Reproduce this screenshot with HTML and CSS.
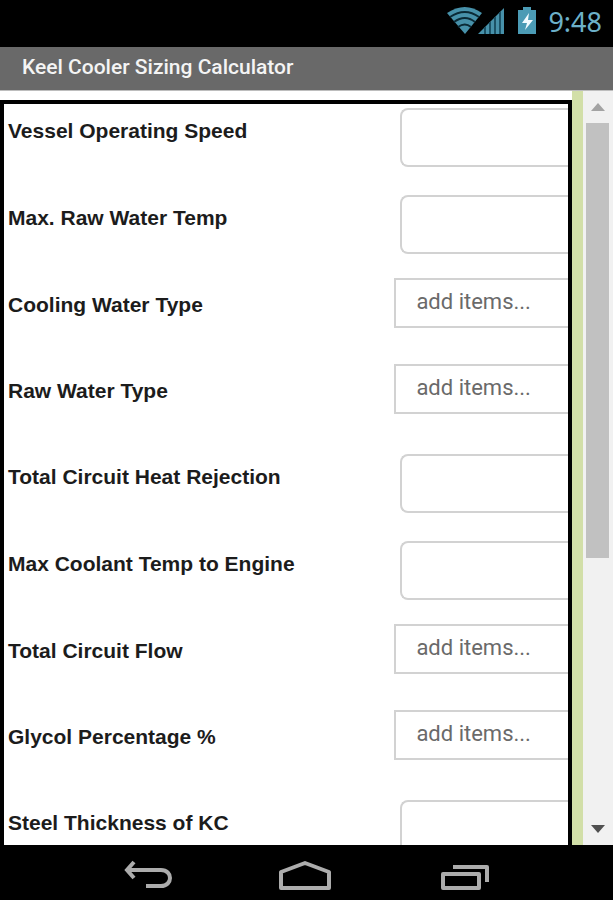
FILE: index.html
```html
<!DOCTYPE html>
<html lang="en">
<head>
<meta charset="utf-8">
<meta name="viewport" content="width=device-width, initial-scale=1">
<title>Keel Cooler Sizing Calculator</title>
<link rel="stylesheet" href="styles.css">
</head>
<body>
<div class="status">
  <svg class="status-icons" width="90" height="32" viewBox="0 0 90 32" aria-hidden="true">
    <path d="M0 7Q18-5 35 7L18 28Z" fill="#4791aa"/>
    <path d="M3 11Q18 1 32 11M7 16Q18 8 28 16M11 21Q18 16 24 21" fill="none" stroke="#0b2a36" stroke-width="2"/>
    <path d="M31 28L57 2V28Z" fill="#4791aa"/>
    <path d="M38 21V28M43 16V28M48 11V28M53 6V28" stroke="#1c5266" stroke-width="2"/>
    <path d="M71 4H76V1H84V4H89V28H71Z" fill="#4b9bb5"/>
    <path d="M82 7L75 17H80L78 24L86 14H81Z" fill="#f2fbff"/>
  </svg>
  <span class="clock">9:48</span>
</div>
<header class="titlebar"><h1 class="title">Keel Cooler Sizing Calculator</h1></header>
<main class="content">
  <form class="panel">
    <div class="row"><label class="label" for="speed">Vessel Operating Speed</label><input class="field" id="speed" type="text"></div>
    <div class="row"><label class="label" for="rawtemp">Max. Raw Water Temp</label><input class="field" id="rawtemp" type="text"></div>
    <div class="row row-pick"><label class="label" for="cooltype">Cooling Water Type</label><select class="pick" id="cooltype"><option>add items...</option></select></div>
    <div class="row row-pick"><label class="label" for="rawtype">Raw Water Type</label><select class="pick" id="rawtype"><option>add items...</option></select></div>
    <div class="row"><label class="label" for="heat">Total Circuit Heat Rejection</label><input class="field" id="heat" type="text"></div>
    <div class="row"><label class="label" for="coolant">Max Coolant Temp to Engine</label><input class="field" id="coolant" type="text"></div>
    <div class="row row-pick"><label class="label" for="flow">Total Circuit Flow</label><select class="pick" id="flow"><option>add items...</option></select></div>
    <div class="row row-pick"><label class="label" for="glycol">Glycol Percentage %</label><select class="pick" id="glycol"><option>add items...</option></select></div>
    <div class="row"><label class="label" for="steel">Steel Thickness of KC</label><input class="field" id="steel" type="text"></div>
  </form>
  <div class="stripe"></div>
  <div class="scrollbar">
    <button class="arrow" type="button" aria-label="Scroll up"><svg width="14" height="8" viewBox="0 0 14 8"><path d="M0 8L7 0L14 8Z" fill="#a3a3a3"/></svg></button>
    <div class="track"><div class="thumb"></div></div>
    <button class="arrow" type="button" aria-label="Scroll down"><svg width="14" height="8" viewBox="0 0 14 8"><path d="M0 0H14L7 8Z" fill="#505050"/></svg></button>
  </div>
</main>
<nav class="navbar">
  <button class="key" type="button" aria-label="Back"><svg width="50" height="32" viewBox="0 0 50 32"><path d="M3 11H37C49 11 49 27 37 27H22M10 3L3 11L10 19" fill="none" stroke="#acacac" stroke-width="4"/></svg></button>
  <button class="key" type="button" aria-label="Home"><svg width="54" height="32" viewBox="0 0 54 32"><path d="M3 13L27 4L51 13V29H3Z" fill="none" stroke="#acacac" stroke-width="4" stroke-linejoin="round"/></svg></button>
  <button class="key" type="button" aria-label="Recent apps"><svg width="54" height="32" viewBox="0 0 54 32"><path d="M7 15H43V29H7ZM17 8H51V23" fill="none" stroke="#acacac" stroke-width="4" stroke-linejoin="round"/></svg></button>
</nav>
</body>
</html>
```
FILE: styles.css
```css
* { box-sizing: border-box; }

body {
  margin: 0;
  height: 100vh;
  display: flex;
  flex-direction: column;
  overflow: hidden;
  background: #fff;
  font-family: "Liberation Sans", Arial, sans-serif;
}

.status {
  flex: none;
  display: flex;
  justify-content: flex-end;
  align-items: center;
  gap: 11px;
  height: 47px;
  padding: 0 11px 4px 0;
  background: #000;
}

.clock {
  font-family: "Noto Sans", sans-serif;
  font-size: 27px;
  line-height: 40px;
  color: #6cb0c8;
}

.titlebar {
  flex: none;
  height: 44px;
  padding: 4px 22px;
  background: #696969;
  border-bottom: 1px solid #bdbdbd;
}

.title {
  margin: 0;
  font: 500 21px/32px Roboto, sans-serif;
  color: #f4f4f4;
}

.content {
  flex: 1;
  min-height: 0;
  display: flex;
}

.panel {
  flex: 1;
  min-width: 0;
  margin-top: 9px;
  overflow: hidden;
  border: solid #000;
  border-width: 4px 4px 0;
}

.row {
  display: flex;
  justify-content: space-between;
  align-items: flex-start;
  height: 87px;
  padding: 4px 0 0 4px;
}

.row-pick {
  height: 86px;
  padding-top: 0;
}

.label {
  padding-top: 8px;
  font-size: 21px;
  font-weight: 700;
  line-height: 30px;
  color: #1c1c1c;
}

.row-pick .label { padding-top: 12px; }

.field,
.pick {
  flex: none;
  margin: 0;
  border: 2px solid #d2d2d2;
  border-right: 0;
  background: #fff;
  font: 22px/30px Roboto, sans-serif;
  color: #6a6a6a;
}

.field {
  width: 30%;
  height: 59px;
  padding: 0 16px;
  border-radius: 8px 0 0 8px;
}

.pick {
  width: 31%;
  height: 50px;
  padding: 0 20px 2px;
  border-radius: 0;
  appearance: none;
}

.stripe {
  flex: none;
  width: 11px;
  background: #d2dfa8;
}

.scrollbar {
  flex: none;
  width: 30px;
  display: flex;
  flex-direction: column;
  padding: 0 4px 0 3px;
  background: #f1f1f1;
}

.arrow {
  display: flex;
  align-items: center;
  justify-content: center;
  height: 32px;
  padding: 0;
  border: 0;
  background: none;
}

.track { flex: 1; }

.thumb {
  height: 63%;
  background: #c1c1c1;
}

.navbar {
  flex: none;
  display: flex;
  justify-content: center;
  gap: 104px;
  height: 55px;
  padding-top: 14px;
  background: #000;
}

.key {
  height: 32px;
  padding: 0;
  border: 0;
  background: none;
}
```
